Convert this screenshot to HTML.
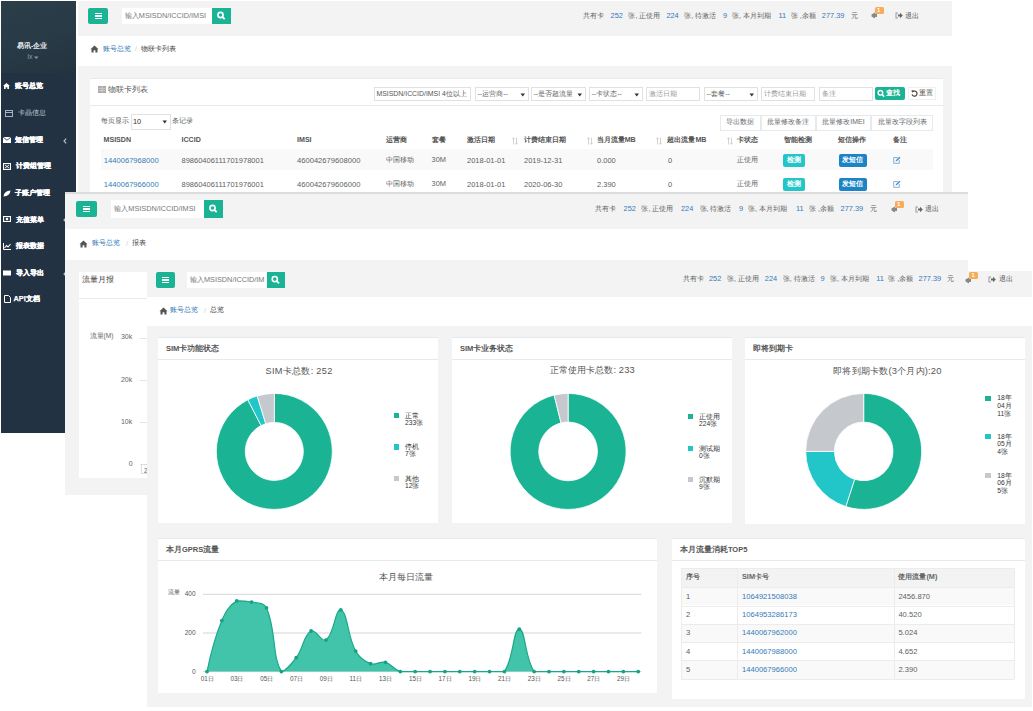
<!DOCTYPE html><html><head><meta charset="utf-8"><style>
html,body{margin:0;padding:0;background:#fff;}
body{width:1033px;height:711px;position:relative;overflow:hidden;font-family:"Liberation Sans",sans-serif;}
.t{position:absolute;white-space:nowrap;}
.r{position:absolute;}
.L{position:absolute;overflow:hidden;}
</style></head><body>
<div class="L" style="left:0;top:0;width:952px;height:433px;">
<div class="r" style="left:78.0px;top:1.0px;width:874.0px;height:35.0px;background:#f3f3f4;"></div>
<div class="r" style="left:78.0px;top:36.0px;width:874.0px;height:29.0px;background:#fff;"></div>
<div class="r" style="left:78.0px;top:65.5px;width:874.0px;height:400.0px;background:#f3f3f4;"></div>
<div class="r" style="left:1.0px;top:1.0px;width:75.4px;height:432.0px;background:#233242;"></div>
<div class="r" style="left:1.0px;top:1.0px;width:75.4px;height:72.0px;background:#2a3b47;background:linear-gradient(160deg,#2c3e48 0%,#283a46 55%,#24343f 100%);"></div>
<div class="t" style="left:17.0px;top:42.3px;font-size:7.0px;line-height:8.4px;color:#e8edf2;font-weight:bold;">易讯-企业</div>
<div class="t" style="left:27.5px;top:52.5px;font-size:7px;line-height:8.4px;color:#8d99a6;">lx</div>
<svg class="r" style="left:33.5px;top:55.5px" width="5" height="4" viewBox="0 0 5 4"><path d="M0,0.5 L4.5,0.5 L2.25,3Z" fill="#8d99a6"/></svg>
<div class="t" style="left:14.8px;top:82.4px;font-size:7.3px;line-height:8.8px;color:#ffffff;font-weight:bold;-webkit-text-stroke:0.25px #fff;">账号总览</div>
<div class="t" style="left:18.3px;top:109.4px;font-size:7.3px;line-height:8.8px;color:#bcc5d0;">卡晶信息</div>
<div class="t" style="left:15.0px;top:136.4px;font-size:7.3px;line-height:8.8px;color:#ffffff;font-weight:bold;-webkit-text-stroke:0.25px #fff;">短信管理</div>
<div class="t" style="left:16.0px;top:162.4px;font-size:7.3px;line-height:8.8px;color:#ffffff;font-weight:bold;-webkit-text-stroke:0.25px #fff;">计费组管理</div>
<div class="t" style="left:15.0px;top:189.4px;font-size:7.3px;line-height:8.8px;color:#ffffff;font-weight:bold;-webkit-text-stroke:0.25px #fff;">子账户管理</div>
<div class="t" style="left:16.2px;top:215.9px;font-size:7.3px;line-height:8.8px;color:#ffffff;font-weight:bold;-webkit-text-stroke:0.25px #fff;">充值菜单</div>
<div class="t" style="left:15.5px;top:242.4px;font-size:7.3px;line-height:8.8px;color:#ffffff;font-weight:bold;-webkit-text-stroke:0.25px #fff;">报表数据</div>
<div class="t" style="left:15.5px;top:269.4px;font-size:7.3px;line-height:8.8px;color:#ffffff;font-weight:bold;-webkit-text-stroke:0.25px #fff;">导入导出</div>
<div class="t" style="left:13.5px;top:295.4px;font-size:7.3px;line-height:8.8px;color:#ffffff;font-weight:bold;-webkit-text-stroke:0.25px #fff;">API文档</div>
<svg class="r" style="left:3.0px;top:82.5px" width="7" height="6" viewBox="0 0 7 6"><path d="M0,3 L3.5,0 L7,3 L6,3 L6,6 L4.3,6 L4.3,4.2 L2.7,4.2 L2.7,6 L1,6 L1,3Z" fill="#fff"/></svg>
<svg class="r" style="left:5.0px;top:109.5px" width="8" height="7" viewBox="0 0 8 7"><rect x="0.5" y="0.5" width="7" height="6" fill="none" stroke="#a7b1c2" stroke-width="1"/><rect x="0.5" y="2" width="7" height="1" fill="#a7b1c2"/></svg>
<svg class="r" style="left:3.0px;top:137.0px" width="8" height="6" viewBox="0 0 8 6"><rect x="0" y="0" width="8" height="6" fill="#fff"/><path d="M0,0 L4,3.2 L8,0" fill="none" stroke="#233242" stroke-width="0.8"/></svg>
<svg class="r" style="left:3.0px;top:162.5px" width="8" height="7" viewBox="0 0 8 7"><rect x="0.5" y="0.5" width="7" height="6" fill="none" stroke="#fff" stroke-width="1.2"/><path d="M2,2 L6,5 M6,2 L2,5" stroke="#fff" stroke-width="0.9"/></svg>
<svg class="r" style="left:3.0px;top:189.5px" width="8" height="7" viewBox="0 0 8 7"><path d="M0.5,6.5 Q1,1 7.5,0.5 Q7,6 0.5,6.5Z" fill="#fff"/></svg>
<svg class="r" style="left:3.0px;top:216.0px" width="8" height="6" viewBox="0 0 8 6"><rect x="0.5" y="0.5" width="7" height="5" fill="none" stroke="#fff" stroke-width="1.2"/><circle cx="4" cy="3" r="1.3" fill="#fff"/></svg>
<svg class="r" style="left:3.0px;top:242.5px" width="8" height="7" viewBox="0 0 8 7"><path d="M0.5,0 L0.5,6.5 L8,6.5" fill="none" stroke="#fff" stroke-width="1"/><path d="M1.5,5 L3.5,2.5 L5,4 L7.5,1" fill="none" stroke="#fff" stroke-width="1.1"/></svg>
<svg class="r" style="left:3.0px;top:269.5px" width="8" height="6" viewBox="0 0 8 6"><rect x="0" y="0.5" width="8" height="5" fill="#fff"/></svg>
<svg class="r" style="left:4.0px;top:295.0px" width="7" height="8" viewBox="0 0 7 8"><path d="M0.5,0.5 L4.5,0.5 L6.5,2.5 L6.5,7.5 L0.5,7.5 Z" fill="none" stroke="#fff" stroke-width="1"/></svg>
<svg class="r" style="left:62.5px;top:137.8px" width="4" height="6" viewBox="0 0 4 6"><path d="M3.2,0.6 L1,3 L3.2,5.4" fill="none" stroke="#c5ccd6" stroke-width="1.1"/></svg>
<svg class="r" style="left:62.5px;top:217.3px" width="4" height="6" viewBox="0 0 4 6"><path d="M3.2,0.6 L1,3 L3.2,5.4" fill="none" stroke="#c5ccd6" stroke-width="1.1"/></svg>
<svg class="r" style="left:62.5px;top:270.8px" width="4" height="6" viewBox="0 0 4 6"><path d="M3.2,0.6 L1,3 L3.2,5.4" fill="none" stroke="#c5ccd6" stroke-width="1.1"/></svg>
<div class="r" style="left:78.0px;top:1.0px;width:874.0px;height:35.0px;background:#f3f3f4;"></div>
<div class="r" style="left:88.0px;top:8.0px;width:20.0px;height:16.0px;background:#1ab394;border-radius:2px;"></div>
<div class="r" style="left:94.5px;top:12.8px;width:7.0px;height:1.5px;background:#fff;"></div>
<div class="r" style="left:94.5px;top:15.2px;width:7.0px;height:1.5px;background:#fff;"></div>
<div class="r" style="left:94.5px;top:17.8px;width:7.0px;height:1.5px;background:#fff;"></div>
<div class="r" style="left:121.8px;top:8.0px;width:90.3px;height:16.0px;background:#fff;"></div>
<div class="t" style="left:124.8px;top:12.1px;font-size:7.3px;line-height:8.8px;color:#787878;">输入MSISDN/ICCID/IMSI</div>
<div class="r" style="left:212.0px;top:8.0px;width:19.0px;height:16.0px;background:#1ab394;"></div>
<svg class="r" style="left:212.0px;top:8.0px" width="19" height="16" viewBox="0 0 19 16"><circle cx="8.5" cy="7.0" r="2.6" fill="none" stroke="#fff" stroke-width="1.6"/><line x1="10.3" y1="8.8" x2="12.7" y2="11.2" stroke="#fff" stroke-width="1.8"/></svg>
<div class="t" style="left:582.7px;top:11.6px;font-size:7.1px;line-height:8.5px;color:#5c5f61;">共有卡</div>
<div class="t" style="left:610.6px;top:11.5px;font-size:7.4px;line-height:8.9px;color:#337ab7;">252</div>
<div class="t" style="left:628.4px;top:11.6px;font-size:7.1px;line-height:8.5px;color:#5c5f61;">张, 正使用</div>
<div class="t" style="left:666.4px;top:11.5px;font-size:7.4px;line-height:8.9px;color:#337ab7;">224</div>
<div class="t" style="left:684.2px;top:11.6px;font-size:7.1px;line-height:8.5px;color:#5c5f61;">张, 待激活</div>
<div class="t" style="left:722.9px;top:11.5px;font-size:7.4px;line-height:8.9px;color:#337ab7;">9</div>
<div class="t" style="left:732.0px;top:11.6px;font-size:7.1px;line-height:8.5px;color:#5c5f61;">张, 本月到期</div>
<div class="t" style="left:778.4px;top:11.5px;font-size:7.4px;line-height:8.9px;color:#337ab7;">11</div>
<div class="t" style="left:790.8px;top:11.6px;font-size:7.1px;line-height:8.5px;color:#5c5f61;">张 ,余额</div>
<div class="t" style="left:821.8px;top:11.5px;font-size:7.4px;line-height:8.9px;color:#337ab7;">277.39</div>
<div class="t" style="left:850.8px;top:11.6px;font-size:7.1px;line-height:8.5px;color:#5c5f61;">元</div>
<svg class="r" style="left:870.5px;top:12.0px" width="9" height="7" viewBox="0 0 9 7"><path d="M0.5,2.5 L4,0.5 L4,6.5 L0.5,4.5 Z" fill="#888"/><rect x="4" y="2" width="2" height="3" fill="#888"/></svg>
<div class="r" style="left:874.5px;top:7.0px;width:9.0px;height:7.0px;background:#f8ac59;border-radius:1.5px;"></div>
<div class="t" style="left:877.1px;top:7.0px;font-size:6px;line-height:7.2px;color:#fff;font-weight:bold;">1</div>
<svg class="r" style="left:894.5px;top:12.4px" width="8" height="7" viewBox="0 0 8 7"><path d="M0.5,0.5 L3,0.5 L3,1.5 L1.5,1.5 L1.5,5.5 L3,5.5 L3,6.5 L0.5,6.5 Z" fill="#999"/><path d="M3,2.5 L5,2.5 L5,0.8 L7.8,3.5 L5,6.2 L5,4.5 L3,4.5 Z" fill="#666"/></svg>
<div class="t" style="left:905.0px;top:11.6px;font-size:7.2px;line-height:8.6px;color:#555;">退出</div>
<svg class="r" style="left:90.0px;top:45.0px" width="9" height="8" viewBox="0 0 9 8"><path d="M0.5,4.2 L4.5,0.6 L8.5,4.2 L7.5,4.2 L7.5,7.6 L5.4,7.6 L5.4,5.3 L3.6,5.3 L3.6,7.6 L1.5,7.6 L1.5,4.2 Z" fill="#555"/></svg>
<div class="t" style="left:103.0px;top:44.9px;font-size:7.3px;line-height:8.8px;color:#337ab7;">账号总览</div>
<div class="t" style="left:135.0px;top:45.1px;font-size:7px;line-height:8.4px;color:#ccc;">/</div>
<div class="t" style="left:141.0px;top:44.9px;font-size:7.3px;line-height:8.8px;color:#444;">物联卡列表</div>
<div class="r" style="left:90.0px;top:78.0px;width:853.0px;height:360.0px;background:#fff;border-top:1px solid #e7eaec;box-sizing:border-box;"></div>
<div class="r" style="left:90.0px;top:105.0px;width:853.0px;height:1.0px;background:#e7eaec;"></div>
<svg class="r" style="left:98.0px;top:86.0px" width="8" height="7" viewBox="0 0 8 7"><rect x="0" y="0" width="8" height="7" fill="#aaa"/><path d="M0.5,2.3 H7.5 M0.5,4.6 H7.5 M4,0.5 V6.5" stroke="#ddd" stroke-width="0.7"/></svg>
<div class="t" style="left:108.0px;top:84.9px;font-size:7.6px;line-height:9.1px;color:#555;">物联卡列表</div>
<div class="r" style="left:374.0px;top:87.0px;width:97.0px;height:14.0px;background:#fff;border:1px solid #e0e1e2;box-sizing:border-box;"></div>
<div class="t" style="left:376.5px;top:90.2px;font-size:6.9px;line-height:8.3px;color:#555;">MSISDN/ICCID/IMSI 4位以上</div>
<div class="r" style="left:475.0px;top:87.0px;width:54.0px;height:14.0px;background:#fff;border:1px solid #e0e1e2;box-sizing:border-box;"></div>
<div class="t" style="left:477.5px;top:90.1px;font-size:7.0px;line-height:8.4px;color:#666;">--运营商--</div>
<svg class="r" style="left:520.0px;top:92.5px" width="6" height="4" viewBox="0 0 6 4"><path d="M0.5,0.5 L5,0.5 L2.75,3.5Z" fill="#333"/></svg>
<div class="r" style="left:531.0px;top:87.0px;width:55.0px;height:14.0px;background:#fff;border:1px solid #e0e1e2;box-sizing:border-box;"></div>
<div class="t" style="left:533.5px;top:90.1px;font-size:7.0px;line-height:8.4px;color:#666;">--是否超流量</div>
<svg class="r" style="left:577.0px;top:92.5px" width="6" height="4" viewBox="0 0 6 4"><path d="M0.5,0.5 L5,0.5 L2.75,3.5Z" fill="#333"/></svg>
<div class="r" style="left:589.0px;top:87.0px;width:54.0px;height:14.0px;background:#fff;border:1px solid #e0e1e2;box-sizing:border-box;"></div>
<div class="t" style="left:591.5px;top:90.1px;font-size:7.0px;line-height:8.4px;color:#666;">--卡状态--</div>
<svg class="r" style="left:634.0px;top:92.5px" width="6" height="4" viewBox="0 0 6 4"><path d="M0.5,0.5 L5,0.5 L2.75,3.5Z" fill="#333"/></svg>
<div class="r" style="left:646.0px;top:87.0px;width:54.0px;height:14.0px;background:#fff;border:1px solid #e0e1e2;box-sizing:border-box;"></div>
<div class="t" style="left:648.5px;top:90.1px;font-size:7.0px;line-height:8.4px;color:#999;">激活日期</div>
<div class="r" style="left:704.0px;top:87.0px;width:54.0px;height:14.0px;background:#fff;border:1px solid #e0e1e2;box-sizing:border-box;"></div>
<div class="t" style="left:706.5px;top:90.1px;font-size:7.0px;line-height:8.4px;color:#666;">--套餐--</div>
<svg class="r" style="left:749.0px;top:92.5px" width="6" height="4" viewBox="0 0 6 4"><path d="M0.5,0.5 L5,0.5 L2.75,3.5Z" fill="#333"/></svg>
<div class="r" style="left:761.0px;top:87.0px;width:54.0px;height:14.0px;background:#fff;border:1px solid #e0e1e2;box-sizing:border-box;"></div>
<div class="t" style="left:763.5px;top:90.1px;font-size:7.0px;line-height:8.4px;color:#999;">计费结束日期</div>
<div class="r" style="left:819.0px;top:87.0px;width:54.0px;height:14.0px;background:#fff;border:1px solid #e0e1e2;box-sizing:border-box;"></div>
<div class="t" style="left:821.5px;top:90.1px;font-size:7.0px;line-height:8.4px;color:#999;">备注</div>
<div class="r" style="left:875.0px;top:86.5px;width:30.0px;height:13.5px;background:#1ab394;border-radius:2px;"></div>
<svg class="r" style="left:877.0px;top:88.5px" width="8" height="9" viewBox="0 0 8 9"><circle cx="3.4" cy="3.8" r="2.3" fill="none" stroke="#fff" stroke-width="1.4"/><line x1="5" y1="5.4" x2="7.2" y2="7.6" stroke="#fff" stroke-width="1.5"/></svg>
<div class="t" style="left:885.5px;top:89.0px;font-size:7.2px;line-height:8.6px;color:#fff;font-weight:bold;">查找</div>
<div class="r" style="left:907.5px;top:86.5px;width:28.0px;height:13.5px;background:#fff;border:1px solid #f0f0f0;box-sizing:border-box;"></div>
<svg class="r" style="left:910.5px;top:89.5px" width="7" height="7" viewBox="0 0 7 7"><path d="M2,1.4 A2.6,2.6 0 1 1 1,4.6" fill="none" stroke="#444" stroke-width="1.2"/><path d="M0.4,0.3 L3.2,0.6 L1.2,2.8Z" fill="#444"/></svg>
<div class="t" style="left:918.5px;top:89.0px;font-size:7.2px;line-height:8.6px;color:#555;">重置</div>
<div class="r" style="left:720.0px;top:114.5px;width:40.5px;height:16.0px;background:#fff;border:1px solid #e7eaec;box-sizing:border-box;"></div>
<div class="t" style="left:740.2px;top:118.3px;font-size:7.0px;line-height:8.4px;color:#676a6c;transform:translateX(-50%);">导出数据</div>
<div class="r" style="left:760.5px;top:114.5px;width:55.5px;height:16.0px;background:#fff;border:1px solid #e7eaec;box-sizing:border-box;"></div>
<div class="t" style="left:788.2px;top:118.3px;font-size:7.0px;line-height:8.4px;color:#676a6c;transform:translateX(-50%);">批量修改备注</div>
<div class="r" style="left:816.0px;top:114.5px;width:55.0px;height:16.0px;background:#fff;border:1px solid #e7eaec;box-sizing:border-box;"></div>
<div class="t" style="left:843.5px;top:118.3px;font-size:7.0px;line-height:8.4px;color:#676a6c;transform:translateX(-50%);">批量修改IMEI</div>
<div class="r" style="left:871.0px;top:114.5px;width:62.0px;height:16.0px;background:#fff;border:1px solid #e7eaec;box-sizing:border-box;"></div>
<div class="t" style="left:902.0px;top:118.3px;font-size:7.0px;line-height:8.4px;color:#676a6c;transform:translateX(-50%);">批量改字段列表</div>
<div class="t" style="left:101.0px;top:117.3px;font-size:7.0px;line-height:8.4px;color:#5c5f61;">每页显示</div>
<div class="r" style="left:130.5px;top:114.0px;width:40.0px;height:15.5px;background:#fff;border:1px solid #e0e1e2;box-sizing:border-box;"></div>
<div class="t" style="left:133.0px;top:117.6px;font-size:7.4px;line-height:8.9px;color:#333;">10</div>
<svg class="r" style="left:161.5px;top:120.2px" width="6" height="4" viewBox="0 0 6 4"><path d="M0.5,0.5 L5,0.5 L2.75,3.5Z" fill="#333"/></svg>
<div class="t" style="left:171.5px;top:117.3px;font-size:7.0px;line-height:8.4px;color:#5c5f61;">条记录</div>
<div class="t" style="left:103.5px;top:136.2px;font-size:7.1px;line-height:8.5px;color:#555;font-weight:bold;">MSISDN</div>
<div class="t" style="left:181.5px;top:136.2px;font-size:7.1px;line-height:8.5px;color:#555;font-weight:bold;">ICCID</div>
<div class="t" style="left:297.0px;top:136.2px;font-size:7.1px;line-height:8.5px;color:#555;font-weight:bold;">IMSI</div>
<div class="t" style="left:386.0px;top:136.2px;font-size:7.1px;line-height:8.5px;color:#555;font-weight:bold;">运营商</div>
<div class="t" style="left:431.5px;top:136.2px;font-size:7.1px;line-height:8.5px;color:#555;font-weight:bold;">套餐</div>
<div class="t" style="left:467.0px;top:136.2px;font-size:7.1px;line-height:8.5px;color:#555;font-weight:bold;">激活日期</div>
<div class="t" style="left:524.0px;top:136.2px;font-size:7.1px;line-height:8.5px;color:#555;font-weight:bold;">计费结束日期</div>
<div class="t" style="left:596.7px;top:136.2px;font-size:7.1px;line-height:8.5px;color:#555;font-weight:bold;">当月流量MB</div>
<div class="t" style="left:667.4px;top:136.2px;font-size:7.1px;line-height:8.5px;color:#555;font-weight:bold;">超出流量MB</div>
<div class="t" style="left:737.0px;top:136.2px;font-size:7.1px;line-height:8.5px;color:#555;font-weight:bold;">卡状态</div>
<div class="t" style="left:783.5px;top:136.2px;font-size:7.1px;line-height:8.5px;color:#555;font-weight:bold;">智能检测</div>
<div class="t" style="left:837.6px;top:136.2px;font-size:7.1px;line-height:8.5px;color:#555;font-weight:bold;">短信操作</div>
<div class="t" style="left:893.0px;top:136.2px;font-size:7.1px;line-height:8.5px;color:#555;font-weight:bold;">备注</div>
<svg class="r" style="left:512.0px;top:137.0px" width="6" height="8" viewBox="0 0 6 8"><path d="M1.5,7.5 V1 M0.3,2.2 L1.5,0.6 L2.7,2.2 M4.5,0.5 V7 M3.3,5.8 L4.5,7.4 L5.7,5.8" fill="none" stroke="#cfcfcf" stroke-width="0.9"/></svg>
<svg class="r" style="left:587.0px;top:137.0px" width="6" height="8" viewBox="0 0 6 8"><path d="M1.5,7.5 V1 M0.3,2.2 L1.5,0.6 L2.7,2.2 M4.5,0.5 V7 M3.3,5.8 L4.5,7.4 L5.7,5.8" fill="none" stroke="#cfcfcf" stroke-width="0.9"/></svg>
<svg class="r" style="left:656.0px;top:137.0px" width="6" height="8" viewBox="0 0 6 8"><path d="M1.5,7.5 V1 M0.3,2.2 L1.5,0.6 L2.7,2.2 M4.5,0.5 V7 M3.3,5.8 L4.5,7.4 L5.7,5.8" fill="none" stroke="#cfcfcf" stroke-width="0.9"/></svg>
<svg class="r" style="left:726.5px;top:137.0px" width="6" height="8" viewBox="0 0 6 8"><path d="M1.5,7.5 V1 M0.3,2.2 L1.5,0.6 L2.7,2.2 M4.5,0.5 V7 M3.3,5.8 L4.5,7.4 L5.7,5.8" fill="none" stroke="#cfcfcf" stroke-width="0.9"/></svg>
<div class="r" style="left:100.5px;top:148.5px;width:832.0px;height:21.0px;background:#f9f9f9;"></div>
<div class="t" style="left:103.8px;top:155.8px;font-size:7.6px;line-height:9.1px;color:#337ab7;">1440067968000</div>
<div class="t" style="left:181.5px;top:155.9px;font-size:7.5px;line-height:9.0px;color:#5c5f61;">89860406111701978001</div>
<div class="t" style="left:297.0px;top:155.8px;font-size:7.6px;line-height:9.1px;color:#5c5f61;">460042679608000</div>
<div class="t" style="left:386.0px;top:156.2px;font-size:7.0px;line-height:8.4px;color:#5c5f61;">中国移动</div>
<div class="t" style="left:431.6px;top:156.0px;font-size:7.4px;line-height:8.9px;color:#5c5f61;">30M</div>
<div class="t" style="left:467.0px;top:155.9px;font-size:7.5px;line-height:9.0px;color:#5c5f61;">2018-01-01</div>
<div class="t" style="left:524.0px;top:155.9px;font-size:7.5px;line-height:9.0px;color:#5c5f61;">2019-12-31</div>
<div class="t" style="left:597.0px;top:155.9px;font-size:7.5px;line-height:9.0px;color:#5c5f61;">0.000</div>
<div class="t" style="left:668.0px;top:155.9px;font-size:7.5px;line-height:9.0px;color:#5c5f61;">0</div>
<div class="t" style="left:737.0px;top:156.2px;font-size:7.0px;line-height:8.4px;color:#5c5f61;">正使用</div>
<div class="r" style="left:783.0px;top:154.4px;width:21.6px;height:12.6px;background:#23c6c8;border-radius:2px;"></div>
<div class="t" style="left:786.5px;top:156.2px;font-size:7px;line-height:8.4px;color:#fff;font-weight:bold;">检测</div>
<div class="r" style="left:838.5px;top:154.4px;width:28.2px;height:12.6px;background:#1c84c6;border-radius:2px;"></div>
<div class="t" style="left:841.5px;top:156.2px;font-size:7px;line-height:8.4px;color:#fff;font-weight:bold;">发短信</div>
<svg class="r" style="left:893.0px;top:156.4px" width="8" height="8" viewBox="0 0 8 8"><path d="M2.5,5.5 L3,4 L6.5,0.7 L7.5,1.7 L4,5 Z" fill="#4a8fc9"/><path d="M5,1.5 H0.7 V7.3 H6.3 V4" fill="none" stroke="#6aa0d0" stroke-width="0.8"/></svg>
<div class="t" style="left:103.8px;top:179.7px;font-size:7.6px;line-height:9.1px;color:#337ab7;">1440067966000</div>
<div class="t" style="left:181.5px;top:179.8px;font-size:7.5px;line-height:9.0px;color:#5c5f61;">89860406111701976001</div>
<div class="t" style="left:297.0px;top:179.7px;font-size:7.6px;line-height:9.1px;color:#5c5f61;">460042679606000</div>
<div class="t" style="left:386.0px;top:180.1px;font-size:7.0px;line-height:8.4px;color:#5c5f61;">中国移动</div>
<div class="t" style="left:431.6px;top:179.9px;font-size:7.4px;line-height:8.9px;color:#5c5f61;">30M</div>
<div class="t" style="left:467.0px;top:179.8px;font-size:7.5px;line-height:9.0px;color:#5c5f61;">2018-01-01</div>
<div class="t" style="left:524.0px;top:179.8px;font-size:7.5px;line-height:9.0px;color:#5c5f61;">2020-06-30</div>
<div class="t" style="left:597.0px;top:179.8px;font-size:7.5px;line-height:9.0px;color:#5c5f61;">2.390</div>
<div class="t" style="left:668.0px;top:179.8px;font-size:7.5px;line-height:9.0px;color:#5c5f61;">0</div>
<div class="t" style="left:737.0px;top:180.1px;font-size:7.0px;line-height:8.4px;color:#5c5f61;">正使用</div>
<div class="r" style="left:783.0px;top:178.3px;width:21.6px;height:12.6px;background:#23c6c8;border-radius:2px;"></div>
<div class="t" style="left:786.5px;top:180.1px;font-size:7px;line-height:8.4px;color:#fff;font-weight:bold;">检测</div>
<div class="r" style="left:838.5px;top:178.3px;width:28.2px;height:12.6px;background:#1c84c6;border-radius:2px;"></div>
<div class="t" style="left:841.5px;top:180.1px;font-size:7px;line-height:8.4px;color:#fff;font-weight:bold;">发短信</div>
<svg class="r" style="left:893.0px;top:180.3px" width="8" height="8" viewBox="0 0 8 8"><path d="M2.5,5.5 L3,4 L6.5,0.7 L7.5,1.7 L4,5 Z" fill="#4a8fc9"/><path d="M5,1.5 H0.7 V7.3 H6.3 V4" fill="none" stroke="#6aa0d0" stroke-width="0.8"/></svg>
</div>
<div class="L" style="left:65px;top:192px;width:903px;height:303px;background:#f3f3f4;">
<div class="r" style="left:0.0px;top:37.0px;width:903.0px;height:31.0px;background:#fff;"></div>
<div class="r" style="left:0.0px;top:0.0px;width:903.0px;height:37.0px;background:#f3f3f4;"></div>
<div class="r" style="left:11.0px;top:9.0px;width:21.0px;height:16.0px;background:#1ab394;border-radius:2px;"></div>
<div class="r" style="left:18.0px;top:13.8px;width:7.0px;height:1.5px;background:#fff;"></div>
<div class="r" style="left:18.0px;top:16.2px;width:7.0px;height:1.5px;background:#fff;"></div>
<div class="r" style="left:18.0px;top:18.8px;width:7.0px;height:1.5px;background:#fff;"></div>
<div class="r" style="left:46.3px;top:8.0px;width:93.0px;height:18.0px;background:#fff;"></div>
<div class="t" style="left:49.3px;top:13.1px;font-size:7.3px;line-height:8.8px;color:#787878;">输入MSISDN/ICCID/IMSI</div>
<div class="r" style="left:139.2px;top:8.0px;width:19.0px;height:18.0px;background:#1ab394;"></div>
<svg class="r" style="left:139.2px;top:8.0px" width="19" height="18" viewBox="0 0 19 18"><circle cx="8.5" cy="8.0" r="2.6" fill="none" stroke="#fff" stroke-width="1.6"/><line x1="10.3" y1="9.8" x2="12.7" y2="12.2" stroke="#fff" stroke-width="1.8"/></svg>
<div class="t" style="left:530.0px;top:12.7px;font-size:7.1px;line-height:8.5px;color:#5c5f61;">共有卡</div>
<div class="t" style="left:558.6px;top:12.6px;font-size:7.4px;line-height:8.9px;color:#337ab7;">252</div>
<div class="t" style="left:576.4px;top:12.7px;font-size:7.1px;line-height:8.5px;color:#5c5f61;">张, 正使用</div>
<div class="t" style="left:616.0px;top:12.6px;font-size:7.4px;line-height:8.9px;color:#337ab7;">224</div>
<div class="t" style="left:634.5px;top:12.7px;font-size:7.1px;line-height:8.5px;color:#5c5f61;">张, 待激活</div>
<div class="t" style="left:674.0px;top:12.6px;font-size:7.4px;line-height:8.9px;color:#337ab7;">9</div>
<div class="t" style="left:683.1px;top:12.7px;font-size:7.1px;line-height:8.5px;color:#5c5f61;">张, 本月到期</div>
<div class="t" style="left:731.0px;top:12.6px;font-size:7.4px;line-height:8.9px;color:#337ab7;">11</div>
<div class="t" style="left:744.0px;top:12.7px;font-size:7.1px;line-height:8.5px;color:#5c5f61;">张 ,余额</div>
<div class="t" style="left:775.6px;top:12.6px;font-size:7.4px;line-height:8.9px;color:#337ab7;">277.39</div>
<div class="t" style="left:805.0px;top:12.7px;font-size:7.1px;line-height:8.5px;color:#5c5f61;">元</div>
<svg class="r" style="left:825.5px;top:13.6px" width="9" height="7" viewBox="0 0 9 7"><path d="M0.5,2.5 L4,0.5 L4,6.5 L0.5,4.5 Z" fill="#888"/><rect x="4" y="2" width="2" height="3" fill="#888"/></svg>
<div class="r" style="left:829.5px;top:8.6px;width:9.0px;height:7.0px;background:#f8ac59;border-radius:1.5px;"></div>
<div class="t" style="left:832.1px;top:8.6px;font-size:6px;line-height:7.2px;color:#fff;font-weight:bold;">1</div>
<svg class="r" style="left:849.8px;top:13.5px" width="8" height="7" viewBox="0 0 8 7"><path d="M0.5,0.5 L3,0.5 L3,1.5 L1.5,1.5 L1.5,5.5 L3,5.5 L3,6.5 L0.5,6.5 Z" fill="#999"/><path d="M3,2.5 L5,2.5 L5,0.8 L7.8,3.5 L5,6.2 L5,4.5 L3,4.5 Z" fill="#666"/></svg>
<div class="t" style="left:860.3px;top:12.7px;font-size:7.2px;line-height:8.6px;color:#555;">退出</div>
<svg class="r" style="left:14.0px;top:47.5px" width="9" height="8" viewBox="0 0 9 8"><path d="M0.5,4.2 L4.5,0.6 L8.5,4.2 L7.5,4.2 L7.5,7.6 L5.4,7.6 L5.4,5.3 L3.6,5.3 L3.6,7.6 L1.5,7.6 L1.5,4.2 Z" fill="#555"/></svg>
<div class="t" style="left:27.0px;top:47.4px;font-size:7.3px;line-height:8.8px;color:#337ab7;">账号总览</div>
<div class="t" style="left:61.0px;top:47.6px;font-size:7px;line-height:8.4px;color:#ccc;">/</div>
<div class="t" style="left:67.0px;top:47.4px;font-size:7.3px;line-height:8.8px;color:#444;">报表</div>
<div class="r" style="left:14.0px;top:80.0px;width:70.0px;height:205.5px;background:#fff;"></div>
<div class="r" style="left:14.0px;top:106.0px;width:70.0px;height:1.0px;background:#e7eaec;"></div>
<div class="r" style="left:0.0px;top:0.0px;width:903.0px;height:1.5px;background:#dcdcdc;"></div>
<div class="t" style="left:17.0px;top:83.3px;font-size:7.8px;line-height:9.4px;color:#444;">流量月报</div>
<div class="t" style="left:24.5px;top:140.0px;font-size:6.6px;line-height:7.9px;color:#666;">流量(M)</div>
<div class="t" style="left:55.9px;top:141.3px;font-size:7px;line-height:8.4px;color:#666;">30k</div>
<div class="r" style="left:75.0px;top:146.0px;width:7.0px;height:1.0px;background:#e5e5e5;"></div>
<div class="t" style="left:55.9px;top:184.3px;font-size:7px;line-height:8.4px;color:#666;">20k</div>
<div class="r" style="left:75.0px;top:188.0px;width:7.0px;height:1.0px;background:#e5e5e5;"></div>
<div class="t" style="left:55.9px;top:225.8px;font-size:7px;line-height:8.4px;color:#666;">10k</div>
<div class="r" style="left:75.0px;top:230.0px;width:7.0px;height:1.0px;background:#e5e5e5;"></div>
<div class="t" style="left:63.7px;top:267.6px;font-size:7px;line-height:8.4px;color:#666;">0</div>
<div class="r" style="left:75.0px;top:272.0px;width:7.0px;height:1.0px;background:#e5e5e5;"></div>
<div class="r" style="left:75.5px;top:271.5px;width:10.0px;height:10.0px;background:#fff;border:1px solid #ddd;box-sizing:border-box;"></div>
<div class="t" style="left:79.0px;top:275.1px;font-size:6.5px;line-height:7.8px;color:#666;">2</div>
</div>
<div class="L" style="left:147px;top:271px;width:885px;height:436px;background:#f3f3f4;">
<div class="r" style="left:0.0px;top:26.0px;width:885.0px;height:29.0px;background:#fff;"></div>
<div class="r" style="left:0.0px;top:0.0px;width:885.0px;height:26.0px;background:#f3f3f4;"></div>
<div class="r" style="left:8.7px;top:1.0px;width:19.2px;height:16.0px;background:#1ab394;border-radius:2px;"></div>
<div class="r" style="left:14.8px;top:5.8px;width:7.0px;height:1.5px;background:#fff;"></div>
<div class="r" style="left:14.8px;top:8.2px;width:7.0px;height:1.5px;background:#fff;"></div>
<div class="r" style="left:14.8px;top:10.8px;width:7.0px;height:1.5px;background:#fff;"></div>
<div class="r" style="left:40.0px;top:0.5px;width:80.0px;height:16.2px;background:#fff;"></div>
<div class="t" style="left:43.0px;top:4.7px;font-size:7.3px;line-height:8.8px;color:#787878;">输入MSISDN/ICCID/IM</div>
<div class="r" style="left:120.0px;top:0.5px;width:17.6px;height:16.2px;background:#1ab394;"></div>
<svg class="r" style="left:120.0px;top:0.5px" width="17.6" height="16.2" viewBox="0 0 17.6 16.2"><circle cx="7.800000000000001" cy="7.1" r="2.6" fill="none" stroke="#fff" stroke-width="1.6"/><line x1="9.600000000000001" y1="8.9" x2="12.0" y2="11.3" stroke="#fff" stroke-width="1.8"/></svg>
<div class="t" style="left:535.7px;top:4.2px;font-size:7.1px;line-height:8.5px;color:#5c5f61;">共有卡</div>
<div class="t" style="left:562.0px;top:4.1px;font-size:7.4px;line-height:8.9px;color:#337ab7;">252</div>
<div class="t" style="left:579.9px;top:4.2px;font-size:7.1px;line-height:8.5px;color:#5c5f61;">张, 正使用</div>
<div class="t" style="left:617.8px;top:4.1px;font-size:7.4px;line-height:8.9px;color:#337ab7;">224</div>
<div class="t" style="left:635.7px;top:4.2px;font-size:7.1px;line-height:8.5px;color:#5c5f61;">张, 待激活</div>
<div class="t" style="left:673.6px;top:4.1px;font-size:7.4px;line-height:8.9px;color:#337ab7;">9</div>
<div class="t" style="left:683.0px;top:4.2px;font-size:7.1px;line-height:8.5px;color:#5c5f61;">张, 本月到期</div>
<div class="t" style="left:729.3px;top:4.1px;font-size:7.4px;line-height:8.9px;color:#337ab7;">11</div>
<div class="t" style="left:741.4px;top:4.2px;font-size:7.1px;line-height:8.5px;color:#5c5f61;">张 ,余额</div>
<div class="t" style="left:771.6px;top:4.1px;font-size:7.4px;line-height:8.9px;color:#337ab7;">277.39</div>
<div class="t" style="left:799.8px;top:4.2px;font-size:7.1px;line-height:8.5px;color:#5c5f61;">元</div>
<svg class="r" style="left:818.0px;top:5.6px" width="9" height="7" viewBox="0 0 9 7"><path d="M0.5,2.5 L4,0.5 L4,6.5 L0.5,4.5 Z" fill="#888"/><rect x="4" y="2" width="2" height="3" fill="#888"/></svg>
<div class="r" style="left:822.0px;top:0.6px;width:9.0px;height:7.0px;background:#f8ac59;border-radius:1.5px;"></div>
<div class="t" style="left:824.6px;top:0.6px;font-size:6px;line-height:7.2px;color:#fff;font-weight:bold;">1</div>
<svg class="r" style="left:841.0px;top:5.0px" width="8" height="7" viewBox="0 0 8 7"><path d="M0.5,0.5 L3,0.5 L3,1.5 L1.5,1.5 L1.5,5.5 L3,5.5 L3,6.5 L0.5,6.5 Z" fill="#999"/><path d="M3,2.5 L5,2.5 L5,0.8 L7.8,3.5 L5,6.2 L5,4.5 L3,4.5 Z" fill="#666"/></svg>
<div class="t" style="left:851.5px;top:4.2px;font-size:7.2px;line-height:8.6px;color:#555;">退出</div>
<svg class="r" style="left:11.7px;top:35.5px" width="9" height="8" viewBox="0 0 9 8"><path d="M0.5,4.2 L4.5,0.6 L8.5,4.2 L7.5,4.2 L7.5,7.6 L5.4,7.6 L5.4,5.3 L3.6,5.3 L3.6,7.6 L1.5,7.6 L1.5,4.2 Z" fill="#555"/></svg>
<div class="t" style="left:22.6px;top:35.3px;font-size:7.3px;line-height:8.8px;color:#337ab7;">账号总览</div>
<div class="t" style="left:57.0px;top:35.5px;font-size:7px;line-height:8.4px;color:#ccc;">/</div>
<div class="t" style="left:62.7px;top:35.3px;font-size:7.3px;line-height:8.8px;color:#444;">总览</div>
<div class="r" style="left:10.5px;top:65.5px;width:280.0px;height:186.5px;background:#fff;"></div>
<div class="r" style="left:10.5px;top:65.5px;width:280.0px;height:1.0px;background:#e7eaec;"></div>
<div class="r" style="left:10.5px;top:87.8px;width:280.0px;height:1.0px;background:#e7eaec;"></div>
<div class="t" style="left:18.9px;top:73.0px;font-size:7.5px;line-height:9.0px;color:#555;font-weight:bold;">SIM卡功能状态</div>
<div class="r" style="left:304.5px;top:65.5px;width:280.0px;height:186.5px;background:#fff;"></div>
<div class="r" style="left:304.5px;top:65.5px;width:280.0px;height:1.0px;background:#e7eaec;"></div>
<div class="r" style="left:304.5px;top:87.8px;width:280.0px;height:1.0px;background:#e7eaec;"></div>
<div class="t" style="left:312.9px;top:73.0px;font-size:7.5px;line-height:9.0px;color:#555;font-weight:bold;">SIM卡业务状态</div>
<div class="r" style="left:598.0px;top:65.5px;width:280.0px;height:187.0px;background:#fff;"></div>
<div class="r" style="left:598.0px;top:65.5px;width:280.0px;height:1.0px;background:#e7eaec;"></div>
<div class="r" style="left:598.0px;top:87.8px;width:280.0px;height:1.0px;background:#e7eaec;"></div>
<div class="t" style="left:606.4px;top:73.0px;font-size:7.5px;line-height:9.0px;color:#555;font-weight:bold;">即将到期卡</div>
<div class="r" style="left:10.5px;top:266.5px;width:499.5px;height:155.5px;background:#fff;"></div>
<div class="r" style="left:10.5px;top:266.5px;width:499.5px;height:1.0px;background:#e7eaec;"></div>
<div class="r" style="left:10.5px;top:288.8px;width:499.5px;height:1.0px;background:#e7eaec;"></div>
<div class="t" style="left:18.9px;top:274.0px;font-size:7.5px;line-height:9.0px;color:#555;font-weight:bold;">本月GPRS流量</div>
<div class="r" style="left:524.5px;top:266.5px;width:353.5px;height:161.5px;background:#fff;"></div>
<div class="r" style="left:524.5px;top:266.5px;width:353.5px;height:1.0px;background:#e7eaec;"></div>
<div class="r" style="left:524.5px;top:288.8px;width:353.5px;height:1.0px;background:#e7eaec;"></div>
<div class="t" style="left:532.9px;top:274.0px;font-size:7.5px;line-height:9.0px;color:#555;font-weight:bold;">本月流量消耗TOP5</div>
<svg style="position:absolute;left:0;top:0" width="885" height="436"><path d="M127.30,122.40 A58,58 0 1 1 100.84,128.79 L114.07,154.59 A29,29 0 1 0 127.30,151.40 Z" fill="#1ab394" stroke="#fff" stroke-width="0.8"/><path d="M100.84,128.79 A58,58 0 0 1 110.20,124.98 L118.75,152.69 A29,29 0 0 0 114.07,154.59 Z" fill="#23c6c8" stroke="#fff" stroke-width="0.8"/><path d="M110.20,124.98 A58,58 0 0 1 127.30,122.40 L127.30,151.40 A29,29 0 0 0 118.75,152.69 Z" fill="#c5c9cd" stroke="#fff" stroke-width="0.8"/><path d="M421.10,122.40 A58,58 0 1 1 407.16,124.10 L414.06,151.96 A29.3,29.3 0 1 0 421.10,151.10 Z" fill="#1ab394" stroke="#fff" stroke-width="0.8"/><path d="M407.16,124.10 A58,58 0 0 1 421.10,122.40 L421.10,151.10 A29.3,29.3 0 0 0 414.06,151.96 Z" fill="#c5c9cd" stroke="#fff" stroke-width="0.8"/><path d="M716.70,122.40 A58,58 0 1 1 698.78,235.56 L707.65,208.27 A29.3,29.3 0 1 0 716.70,151.10 Z" fill="#1ab394" stroke="#fff" stroke-width="0.8"/><path d="M698.78,235.56 A58,58 0 0 1 658.70,180.40 L687.40,180.40 A29.3,29.3 0 0 0 707.65,208.27 Z" fill="#23c6c8" stroke="#fff" stroke-width="0.8"/><path d="M658.70,180.40 A58,58 0 0 1 716.70,122.40 L716.70,151.10 A29.3,29.3 0 0 0 687.40,180.40 Z" fill="#c5c9cd" stroke="#fff" stroke-width="0.8"/></svg>
<div class="t" style="left:118.5px;top:94.5px;font-size:9.2px;line-height:11.0px;color:#555;letter-spacing:0.3px;">SIM卡总数: 252</div>
<div class="t" style="left:402.8px;top:94.4px;font-size:9.3px;line-height:11.2px;color:#555;letter-spacing:0.1px;">正常使用卡总数: 233</div>
<div class="t" style="left:686.2px;top:94.4px;font-size:9.4px;line-height:11.3px;color:#555;letter-spacing:0.2px;">即将到期卡数(3个月内):20</div>
<div class="r" style="left:246.5px;top:141.7px;width:5.6px;height:5.6px;background:#1ab394;"></div>
<div class="t" style="left:258.0px;top:140.6px;font-size:6.7px;line-height:8.0px;color:#333;">正常</div>
<div class="t" style="left:258.0px;top:147.9px;font-size:6.7px;line-height:8.0px;color:#333;">233张</div>
<div class="r" style="left:246.5px;top:173.0px;width:5.6px;height:5.6px;background:#23c6c8;"></div>
<div class="t" style="left:258.0px;top:171.9px;font-size:6.7px;line-height:8.0px;color:#333;">停机</div>
<div class="t" style="left:258.0px;top:179.2px;font-size:6.7px;line-height:8.0px;color:#333;">7张</div>
<div class="r" style="left:246.5px;top:204.7px;width:5.6px;height:5.6px;background:#c5c9cd;"></div>
<div class="t" style="left:258.0px;top:203.6px;font-size:6.7px;line-height:8.0px;color:#333;">其他</div>
<div class="t" style="left:258.0px;top:210.9px;font-size:6.7px;line-height:8.0px;color:#333;">12张</div>
<div class="r" style="left:540.5px;top:142.6px;width:5.6px;height:5.6px;background:#1ab394;"></div>
<div class="t" style="left:552.0px;top:141.5px;font-size:6.7px;line-height:8.0px;color:#333;">正使用</div>
<div class="t" style="left:552.0px;top:148.8px;font-size:6.7px;line-height:8.0px;color:#333;">224张</div>
<div class="r" style="left:540.5px;top:174.6px;width:5.6px;height:5.6px;background:#23c6c8;"></div>
<div class="t" style="left:552.0px;top:173.5px;font-size:6.7px;line-height:8.0px;color:#333;">测试期</div>
<div class="t" style="left:552.0px;top:180.8px;font-size:6.7px;line-height:8.0px;color:#333;">0张</div>
<div class="r" style="left:540.5px;top:205.7px;width:5.6px;height:5.6px;background:#c5c9cd;"></div>
<div class="t" style="left:552.0px;top:204.6px;font-size:6.7px;line-height:8.0px;color:#333;">沉默期</div>
<div class="t" style="left:552.0px;top:211.9px;font-size:6.7px;line-height:8.0px;color:#333;">9张</div>
<div class="r" style="left:838.2px;top:124.5px;width:5.6px;height:5.6px;background:#1ab394;"></div>
<div class="t" style="left:850.2px;top:123.4px;font-size:6.7px;line-height:8.0px;color:#333;">18年</div>
<div class="t" style="left:850.2px;top:131.0px;font-size:6.7px;line-height:8.0px;color:#333;">04月</div>
<div class="t" style="left:850.2px;top:138.6px;font-size:6.7px;line-height:8.0px;color:#333;">11张</div>
<div class="r" style="left:838.2px;top:162.7px;width:5.6px;height:5.6px;background:#23c6c8;"></div>
<div class="t" style="left:850.2px;top:161.6px;font-size:6.7px;line-height:8.0px;color:#333;">18年</div>
<div class="t" style="left:850.2px;top:169.2px;font-size:6.7px;line-height:8.0px;color:#333;">05月</div>
<div class="t" style="left:850.2px;top:176.8px;font-size:6.7px;line-height:8.0px;color:#333;">4张</div>
<div class="r" style="left:838.2px;top:201.6px;width:5.6px;height:5.6px;background:#c5c9cd;"></div>
<div class="t" style="left:850.2px;top:200.5px;font-size:6.7px;line-height:8.0px;color:#333;">18年</div>
<div class="t" style="left:850.2px;top:208.1px;font-size:6.7px;line-height:8.0px;color:#333;">06月</div>
<div class="t" style="left:850.2px;top:215.7px;font-size:6.7px;line-height:8.0px;color:#333;">5张</div>
<svg style="position:absolute;left:0;top:0" width="885" height="436"><rect x="56" y="322.80" width="438.4" height="1" fill="#d6d6d6"/><rect x="56" y="361.50" width="438.4" height="1" fill="#d6d6d6"/><rect x="56" y="400.10" width="438.4" height="1" fill="#d6d6d6"/><path d="M60.00,400.60 C60.00,400.60 66.34,369.86 74.87,349.58 C78.83,340.16 81.95,334.73 89.74,329.87 C94.44,329.87 98.58,329.87 104.61,331.03 C111.07,332.54 117.03,331.10 119.48,336.83 C129.52,360.32 124.82,384.63 134.35,400.60 C137.31,400.60 144.22,393.51 149.22,386.69 C156.71,376.46 156.14,364.72 164.09,360.02 C168.63,357.33 174.70,372.12 178.96,369.10 C187.19,363.27 188.40,336.94 193.83,338.95 C200.89,341.57 200.05,364.50 208.70,380.12 C212.55,387.06 216.50,390.01 223.57,392.68 C228.99,394.72 232.69,389.79 238.44,391.32 C245.18,393.12 246.55,398.49 253.31,400.60 C259.04,400.60 261.93,400.60 268.18,400.60 C274.43,400.60 276.80,400.60 283.05,400.60 C289.30,400.60 291.67,400.60 297.92,400.60 C304.17,400.60 306.54,400.60 312.79,400.60 C319.04,400.60 321.41,400.60 327.66,400.60 C333.91,400.60 336.28,400.60 342.53,400.60 C348.78,400.60 354.30,400.60 357.40,400.60 C366.79,387.18 366.02,358.09 372.27,358.09 C378.52,358.09 377.75,387.18 387.14,400.60 C390.24,400.60 395.76,400.60 402.01,400.60 C408.26,400.60 410.63,400.60 416.88,400.60 C423.13,400.60 425.50,400.60 431.75,400.60 C438.00,400.60 440.37,400.60 446.62,400.60 C452.87,400.60 455.24,400.60 461.49,400.60 C467.74,400.60 470.11,400.60 476.36,400.60 C482.61,400.60 491.23,400.60 491.23,400.60 L491.23,400.60 L60.00,400.60 Z" fill="#42c4aa"/><path d="M60.00,400.60 C60.00,400.60 66.34,369.86 74.87,349.58 C78.83,340.16 81.95,334.73 89.74,329.87 C94.44,329.87 98.58,329.87 104.61,331.03 C111.07,332.54 117.03,331.10 119.48,336.83 C129.52,360.32 124.82,384.63 134.35,400.60 C137.31,400.60 144.22,393.51 149.22,386.69 C156.71,376.46 156.14,364.72 164.09,360.02 C168.63,357.33 174.70,372.12 178.96,369.10 C187.19,363.27 188.40,336.94 193.83,338.95 C200.89,341.57 200.05,364.50 208.70,380.12 C212.55,387.06 216.50,390.01 223.57,392.68 C228.99,394.72 232.69,389.79 238.44,391.32 C245.18,393.12 246.55,398.49 253.31,400.60 C259.04,400.60 261.93,400.60 268.18,400.60 C274.43,400.60 276.80,400.60 283.05,400.60 C289.30,400.60 291.67,400.60 297.92,400.60 C304.17,400.60 306.54,400.60 312.79,400.60 C319.04,400.60 321.41,400.60 327.66,400.60 C333.91,400.60 336.28,400.60 342.53,400.60 C348.78,400.60 354.30,400.60 357.40,400.60 C366.79,387.18 366.02,358.09 372.27,358.09 C378.52,358.09 377.75,387.18 387.14,400.60 C390.24,400.60 395.76,400.60 402.01,400.60 C408.26,400.60 410.63,400.60 416.88,400.60 C423.13,400.60 425.50,400.60 431.75,400.60 C438.00,400.60 440.37,400.60 446.62,400.60 C452.87,400.60 455.24,400.60 461.49,400.60 C467.74,400.60 470.11,400.60 476.36,400.60 C482.61,400.60 491.23,400.60 491.23,400.60" fill="none" stroke="#1aa98b" stroke-width="1.2"/><circle cx="60.00" cy="400.60" r="1.9" fill="#14a383"/><circle cx="74.87" cy="349.58" r="1.9" fill="#14a383"/><circle cx="89.74" cy="329.87" r="1.9" fill="#14a383"/><circle cx="104.61" cy="331.03" r="1.9" fill="#14a383"/><circle cx="119.48" cy="336.83" r="1.9" fill="#14a383"/><circle cx="134.35" cy="400.60" r="1.9" fill="#14a383"/><circle cx="149.22" cy="386.69" r="1.9" fill="#14a383"/><circle cx="164.09" cy="360.02" r="1.9" fill="#14a383"/><circle cx="178.96" cy="369.10" r="1.9" fill="#14a383"/><circle cx="193.83" cy="338.95" r="1.9" fill="#14a383"/><circle cx="208.70" cy="380.12" r="1.9" fill="#14a383"/><circle cx="223.57" cy="392.68" r="1.9" fill="#14a383"/><circle cx="238.44" cy="391.32" r="1.9" fill="#14a383"/><circle cx="253.31" cy="400.60" r="1.9" fill="#14a383"/><circle cx="268.18" cy="400.60" r="1.9" fill="#14a383"/><circle cx="283.05" cy="400.60" r="1.9" fill="#14a383"/><circle cx="297.92" cy="400.60" r="1.9" fill="#14a383"/><circle cx="312.79" cy="400.60" r="1.9" fill="#14a383"/><circle cx="327.66" cy="400.60" r="1.9" fill="#14a383"/><circle cx="342.53" cy="400.60" r="1.9" fill="#14a383"/><circle cx="357.40" cy="400.60" r="1.9" fill="#14a383"/><circle cx="372.27" cy="358.09" r="1.9" fill="#14a383"/><circle cx="387.14" cy="400.60" r="1.9" fill="#14a383"/><circle cx="402.01" cy="400.60" r="1.9" fill="#14a383"/><circle cx="416.88" cy="400.60" r="1.9" fill="#14a383"/><circle cx="431.75" cy="400.60" r="1.9" fill="#14a383"/><circle cx="446.62" cy="400.60" r="1.9" fill="#14a383"/><circle cx="461.49" cy="400.60" r="1.9" fill="#14a383"/><circle cx="476.36" cy="400.60" r="1.9" fill="#14a383"/><circle cx="491.23" cy="400.60" r="1.9" fill="#14a383"/></svg>
<div class="t" style="left:231.7px;top:300.7px;font-size:8.9px;line-height:10.7px;color:#555;">本月每日流量</div>
<div class="t" style="left:20.5px;top:317.3px;font-size:6.2px;line-height:7.4px;color:#555;">流量</div>
<div class="t" style="left:37.7px;top:319.1px;font-size:6.5px;line-height:7.8px;color:#555;">400</div>
<div class="t" style="left:37.7px;top:358.1px;font-size:6.5px;line-height:7.8px;color:#555;">200</div>
<div class="t" style="left:44.9px;top:396.6px;font-size:6.5px;line-height:7.8px;color:#555;">0</div>
<div class="t" style="left:53.7px;top:403.8px;font-size:6.3px;line-height:7.6px;color:#555;">01日</div>
<div class="t" style="left:83.4px;top:403.8px;font-size:6.3px;line-height:7.6px;color:#555;">03日</div>
<div class="t" style="left:113.2px;top:403.8px;font-size:6.3px;line-height:7.6px;color:#555;">05日</div>
<div class="t" style="left:142.9px;top:403.8px;font-size:6.3px;line-height:7.6px;color:#555;">07日</div>
<div class="t" style="left:172.7px;top:403.8px;font-size:6.3px;line-height:7.6px;color:#555;">09日</div>
<div class="t" style="left:202.4px;top:403.8px;font-size:6.3px;line-height:7.6px;color:#555;">11日</div>
<div class="t" style="left:232.1px;top:403.8px;font-size:6.3px;line-height:7.6px;color:#555;">13日</div>
<div class="t" style="left:261.9px;top:403.8px;font-size:6.3px;line-height:7.6px;color:#555;">15日</div>
<div class="t" style="left:291.6px;top:403.8px;font-size:6.3px;line-height:7.6px;color:#555;">17日</div>
<div class="t" style="left:321.4px;top:403.8px;font-size:6.3px;line-height:7.6px;color:#555;">19日</div>
<div class="t" style="left:351.1px;top:403.8px;font-size:6.3px;line-height:7.6px;color:#555;">21日</div>
<div class="t" style="left:380.8px;top:403.8px;font-size:6.3px;line-height:7.6px;color:#555;">23日</div>
<div class="t" style="left:410.6px;top:403.8px;font-size:6.3px;line-height:7.6px;color:#555;">25日</div>
<div class="t" style="left:440.3px;top:403.8px;font-size:6.3px;line-height:7.6px;color:#555;">27日</div>
<div class="t" style="left:470.1px;top:403.8px;font-size:6.3px;line-height:7.6px;color:#555;">29日</div>
<div class="r" style="left:534.2px;top:297.2px;width:333.3px;height:19.1px;background:#f3f3f3;"></div>
<div class="r" style="left:534.2px;top:316.3px;width:333.3px;height:18.2px;background:#f9f9f9;"></div>
<div class="r" style="left:534.2px;top:334.5px;width:333.3px;height:18.3px;background:#fff;"></div>
<div class="r" style="left:534.2px;top:352.8px;width:333.3px;height:18.3px;background:#f9f9f9;"></div>
<div class="r" style="left:534.2px;top:371.1px;width:333.3px;height:18.3px;background:#fff;"></div>
<div class="r" style="left:534.2px;top:389.4px;width:333.3px;height:18.5px;background:#f9f9f9;"></div>
<div class="r" style="left:534.2px;top:297.2px;width:333.3px;height:1.0px;background:#ececec;"></div>
<div class="r" style="left:534.2px;top:316.3px;width:333.3px;height:1.0px;background:#ececec;"></div>
<div class="r" style="left:534.2px;top:334.5px;width:333.3px;height:1.0px;background:#ececec;"></div>
<div class="r" style="left:534.2px;top:352.8px;width:333.3px;height:1.0px;background:#ececec;"></div>
<div class="r" style="left:534.2px;top:371.1px;width:333.3px;height:1.0px;background:#ececec;"></div>
<div class="r" style="left:534.2px;top:389.4px;width:333.3px;height:1.0px;background:#ececec;"></div>
<div class="r" style="left:534.2px;top:407.9px;width:333.3px;height:1.0px;background:#ececec;"></div>
<div class="r" style="left:534.2px;top:297.2px;width:1.0px;height:110.7px;background:#ececec;"></div>
<div class="r" style="left:590.0px;top:297.2px;width:1.0px;height:110.7px;background:#ececec;"></div>
<div class="r" style="left:746.5px;top:297.2px;width:1.0px;height:110.7px;background:#ececec;"></div>
<div class="r" style="left:866.5px;top:297.2px;width:1.0px;height:110.7px;background:#ececec;"></div>
<div class="t" style="left:539.0px;top:302.2px;font-size:7.3px;line-height:8.8px;color:#666;font-weight:bold;">序号</div>
<div class="t" style="left:595.0px;top:302.2px;font-size:7.3px;line-height:8.8px;color:#666;font-weight:bold;">SIM卡号</div>
<div class="t" style="left:751.4px;top:302.2px;font-size:7.3px;line-height:8.8px;color:#666;font-weight:bold;">使用流量(M)</div>
<div class="t" style="left:539.0px;top:320.8px;font-size:7.6px;line-height:9.1px;color:#5c5f61;">1</div>
<div class="t" style="left:595.0px;top:320.8px;font-size:7.6px;line-height:9.1px;color:#337ab7;">1064921508038</div>
<div class="t" style="left:751.4px;top:320.8px;font-size:7.6px;line-height:9.1px;color:#5c5f61;">2456.870</div>
<div class="t" style="left:539.0px;top:339.1px;font-size:7.6px;line-height:9.1px;color:#5c5f61;">2</div>
<div class="t" style="left:595.0px;top:339.1px;font-size:7.6px;line-height:9.1px;color:#337ab7;">1064953286173</div>
<div class="t" style="left:751.4px;top:339.1px;font-size:7.6px;line-height:9.1px;color:#5c5f61;">40.520</div>
<div class="t" style="left:539.0px;top:357.4px;font-size:7.6px;line-height:9.1px;color:#5c5f61;">3</div>
<div class="t" style="left:595.0px;top:357.4px;font-size:7.6px;line-height:9.1px;color:#337ab7;">1440067962000</div>
<div class="t" style="left:751.4px;top:357.4px;font-size:7.6px;line-height:9.1px;color:#5c5f61;">5.024</div>
<div class="t" style="left:539.0px;top:375.7px;font-size:7.6px;line-height:9.1px;color:#5c5f61;">4</div>
<div class="t" style="left:595.0px;top:375.7px;font-size:7.6px;line-height:9.1px;color:#337ab7;">1440067988000</div>
<div class="t" style="left:751.4px;top:375.7px;font-size:7.6px;line-height:9.1px;color:#5c5f61;">4.652</div>
<div class="t" style="left:539.0px;top:394.1px;font-size:7.6px;line-height:9.1px;color:#5c5f61;">5</div>
<div class="t" style="left:595.0px;top:394.1px;font-size:7.6px;line-height:9.1px;color:#337ab7;">1440067966000</div>
<div class="t" style="left:751.4px;top:394.1px;font-size:7.6px;line-height:9.1px;color:#5c5f61;">2.390</div>
</div>
</body></html>
